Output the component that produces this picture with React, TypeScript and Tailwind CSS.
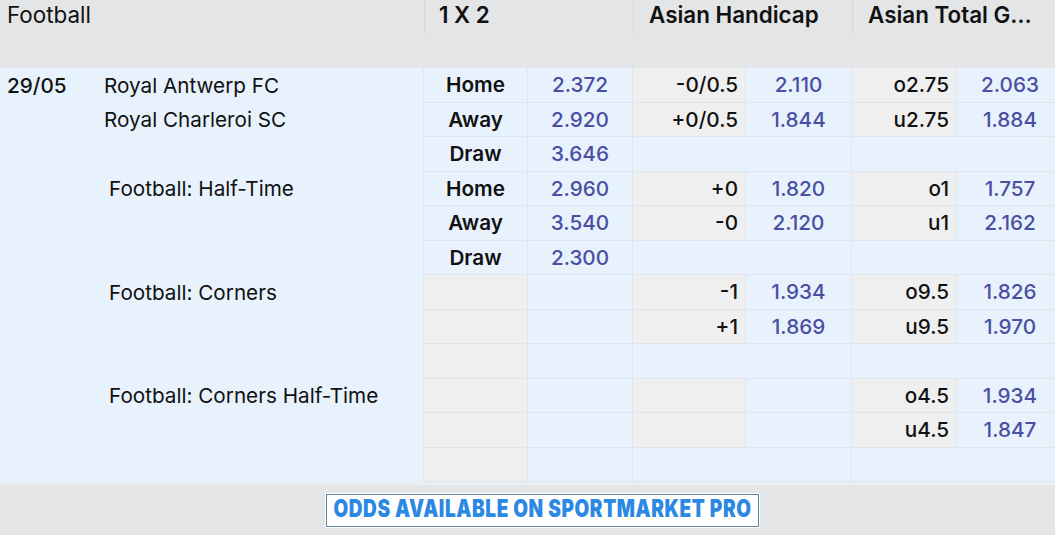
type Cell =
  | { kind: 'label'; text: string }
  | { kind: 'line'; text: string; w: string }
  | { kind: 'odds'; text: string; w: string }
  | { kind: 'grey'; w: string }
  | { kind: 'blue'; w: string };

const W = {
  lab: 'w-[104px]',
  o1: 'w-[105px]',
  ahL: 'w-[113px]',
  ahO: 'w-[106px]',
  ahSpan: 'w-[219px]',
  tgL: 'w-[105px]',
  tgO: 'w-[107px]',
  tgSpan: 'w-[212px]',
};

const main = (l: string, o: string, ahl: string, aho: string, tgl: string, tgo: string): Cell[] => [
  { kind: 'label', text: l },
  { kind: 'odds', text: o, w: W.o1 },
  { kind: 'line', text: ahl, w: W.ahL },
  { kind: 'odds', text: aho, w: W.ahO },
  { kind: 'line', text: tgl, w: W.tgL },
  { kind: 'odds', text: tgo, w: W.tgO },
];

const draw = (o: string): Cell[] => [
  { kind: 'label', text: 'Draw' },
  { kind: 'odds', text: o, w: W.o1 },
  { kind: 'blue', w: W.ahSpan },
  { kind: 'blue', w: W.tgSpan },
];

const rows: Cell[][] = [
  main('Home', '2.372', '-0/0.5', '2.110', 'o2.75', '2.063'),
  main('Away', '2.920', '+0/0.5', '1.844', 'u2.75', '1.884'),
  draw('3.646'),
  main('Home', '2.960', '+0', '1.820', 'o1', '1.757'),
  main('Away', '3.540', '-0', '2.120', 'u1', '2.162'),
  draw('2.300'),
  [
    { kind: 'grey', w: W.lab },
    { kind: 'blue', w: W.o1 },
    { kind: 'line', text: '-1', w: W.ahL },
    { kind: 'odds', text: '1.934', w: W.ahO },
    { kind: 'line', text: 'o9.5', w: W.tgL },
    { kind: 'odds', text: '1.826', w: W.tgO },
  ],
  [
    { kind: 'grey', w: W.lab },
    { kind: 'blue', w: W.o1 },
    { kind: 'line', text: '+1', w: W.ahL },
    { kind: 'odds', text: '1.869', w: W.ahO },
    { kind: 'line', text: 'u9.5', w: W.tgL },
    { kind: 'odds', text: '1.970', w: W.tgO },
  ],
  [
    { kind: 'grey', w: W.lab },
    { kind: 'blue', w: W.o1 },
    { kind: 'blue', w: W.ahSpan },
    { kind: 'blue', w: W.tgSpan },
  ],
  [
    { kind: 'grey', w: W.lab },
    { kind: 'blue', w: W.o1 },
    { kind: 'grey', w: W.ahL },
    { kind: 'blue', w: W.ahO },
    { kind: 'line', text: 'o4.5', w: W.tgL },
    { kind: 'odds', text: '1.934', w: W.tgO },
  ],
  [
    { kind: 'grey', w: W.lab },
    { kind: 'blue', w: W.o1 },
    { kind: 'grey', w: W.ahL },
    { kind: 'blue', w: W.ahO },
    { kind: 'line', text: 'u4.5', w: W.tgL },
    { kind: 'odds', text: '1.847', w: W.tgO },
  ],
  [
    { kind: 'grey', w: W.lab },
    { kind: 'blue', w: W.o1 },
    { kind: 'blue', w: W.ahSpan },
    { kind: 'blue', w: W.tgSpan },
  ],
];

const base = 'h-full shrink-0 border-b border-r border-[#dde5ee] flex items-center';

const renderCell = (c: Cell, i: number) => {
  switch (c.kind) {
    case 'label':
      return (
        <div key={i} className={`${base} w-[104px] justify-center bg-[#e8f2fc] font-semibold text-[#111]`}>
          {c.text}
        </div>
      );
    case 'line':
      return (
        <div key={i} className={`${base} ${c.w} justify-end pr-[7px] bg-[#efefef] font-medium text-[#111]`}>
          {c.text}
        </div>
      );
    case 'odds':
      return (
        <div key={i} className={`${base} ${c.w} justify-center bg-[#e8f2fc] font-medium text-[#4a4fa3]`}>
          {c.text}
        </div>
      );
    case 'grey':
      return <div key={i} className={`${base} ${c.w} bg-[#efefef]`} />;
    default:
      return <div key={i} className={`${base} ${c.w} bg-[#e8f2fc]`} />;
  }
};

const LeftRow = ({ children }: { children?: React.ReactNode }) => (
  <div className="h-[34.5px] flex items-center">{children}</div>
);

export default function App() {
  return (
    <div className="w-[1055px] h-[535px] overflow-hidden bg-[#e4e5e7] text-[#111] font-['Inter','Liberation_Sans',sans-serif]">
      {/* header */}
      <div className="h-[68px] flex text-[22.4px] leading-[28px]">
        <div className="w-[424px] shrink-0 pl-[7px] pt-[1px]">Football</div>
        <div className="w-[209px] shrink-0 h-[34px] border-l border-[#d6d7da] pl-[14px] pt-[1px] font-semibold">
          1 X 2
        </div>
        <div className="w-[219px] shrink-0 h-[34px] border-l border-[#d6d7da] pl-[15px] pt-[1px] font-semibold">
          Asian Handicap
        </div>
        <div className="w-[203px] shrink-0 h-[34px] border-l border-[#d6d7da] pl-[15px] pr-[10px] pt-[1px] font-semibold truncate">
          Asian Total Goals
        </div>
      </div>

      {/* body */}
      <div className="flex h-[414px] text-[20.7px]">
        <div className="w-[424px] shrink-0 bg-[#e8f2fc] border-r border-[#dbe5ef]">
          <LeftRow>
            <span className="w-[104px] shrink-0 pl-[7px] font-medium">29/05</span>
            <span>Royal Antwerp FC</span>
          </LeftRow>
          <LeftRow>
            <span className="pl-[104px]">Royal Charleroi SC</span>
          </LeftRow>
          <LeftRow />
          <LeftRow>
            <span className="pl-[109px]">Football: Half-Time</span>
          </LeftRow>
          <LeftRow />
          <LeftRow />
          <LeftRow>
            <span className="pl-[109px]">Football: Corners</span>
          </LeftRow>
          <LeftRow />
          <LeftRow />
          <LeftRow>
            <span className="pl-[109px]">Football: Corners Half-Time</span>
          </LeftRow>
        </div>
        <div className="flex-1 min-w-0 overflow-hidden rounded-bl-[6px]">
          {rows.map((r, ri) => (
            <div key={ri} className="h-[34.5px] flex w-[640px]">
              {r.map(renderCell)}
            </div>
          ))}
        </div>
      </div>

      {/* footer */}
      <div className="h-[53px] border-t-[3px] border-[#eceef0] flex justify-center pt-[8px] pl-[30px]">
        <div className="h-[35px] w-[435px] bg-white p-[1px]">
          <div className="h-full border border-[#5a85a3] flex items-center justify-center">
            <span className="scale-y-[1.25] text-[19px] font-black tracking-[0.6px] text-[#2b88e3]">
              ODDS AVAILABLE ON SPORTMARKET PRO
            </span>
          </div>
        </div>
      </div>
    </div>
  );
}
